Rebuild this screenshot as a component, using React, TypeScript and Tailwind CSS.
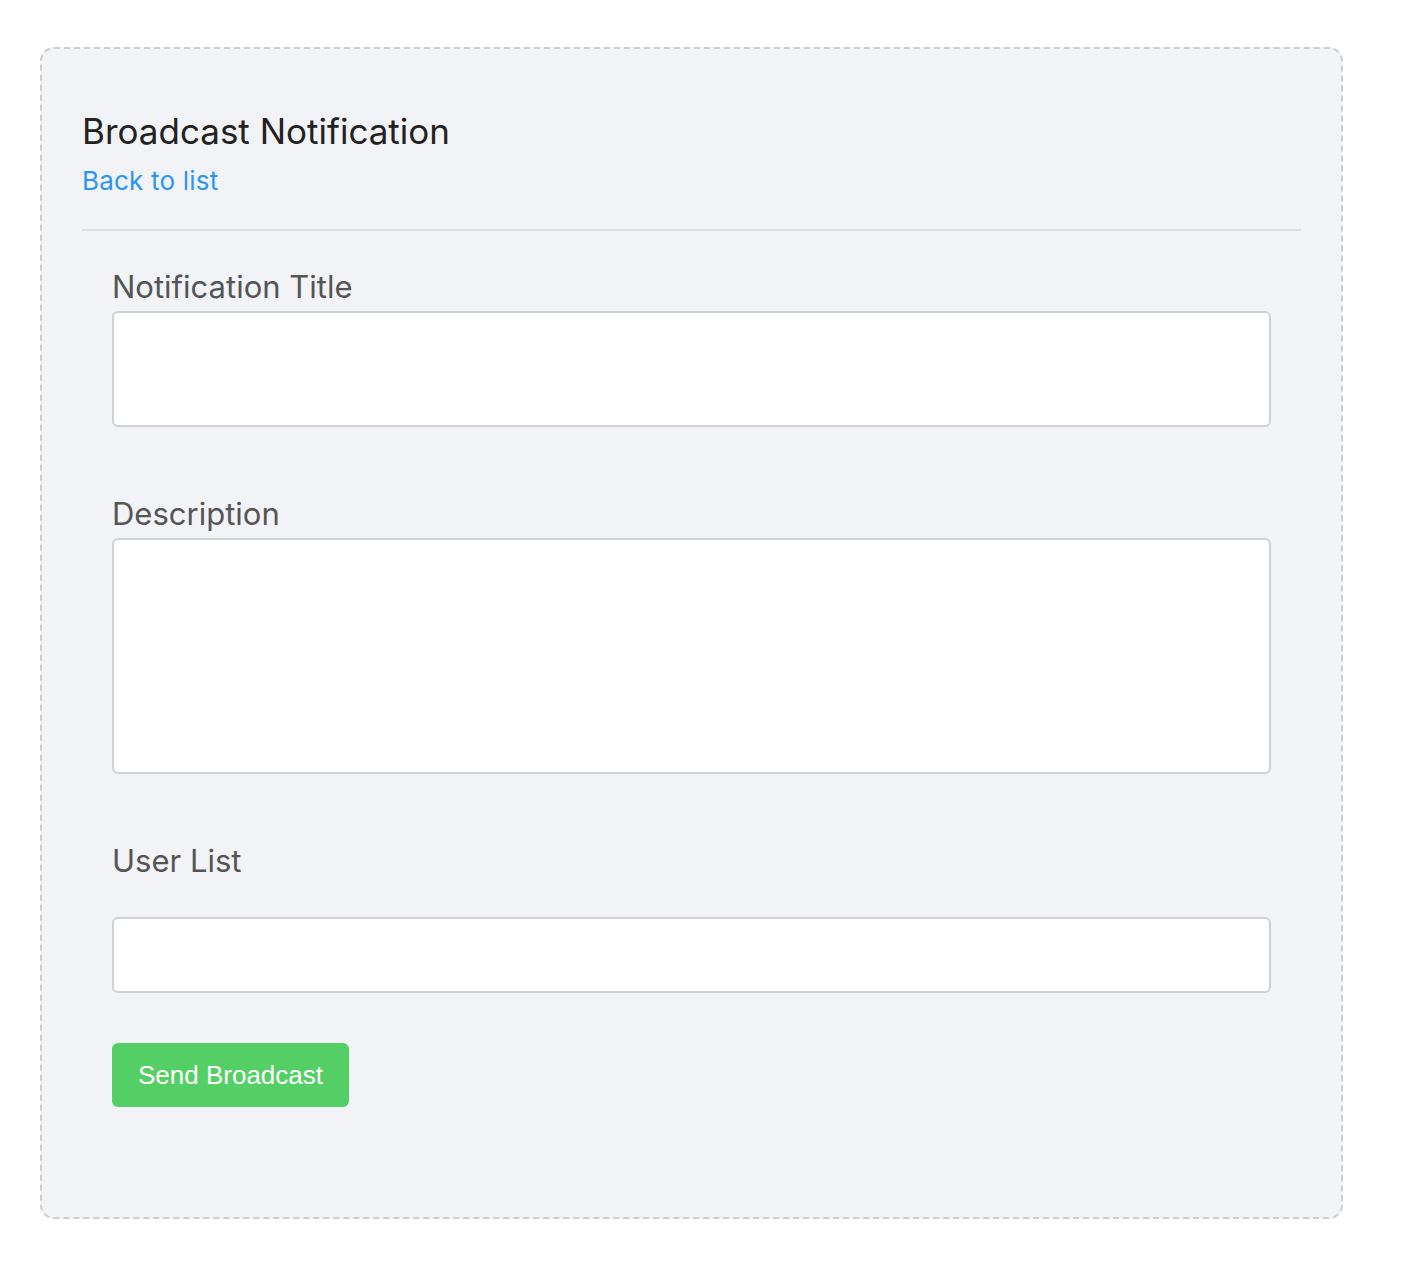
export default function App() {
  return (
    <div className="min-h-screen bg-white pl-[40px] pt-[47px] font-['Inter','Noto_Sans',sans-serif]">
      <div className="w-[1303px] rounded-[14px] border-2 border-dashed border-[#cdcdd0] bg-[#f2f3f7] px-[40px] pb-[110px] pt-[60px]">
        <h3 className="text-[35px] leading-[44px] font-normal text-[#222222]">Broadcast Notification</h3>
        <a href="#" className="mt-[12px] block text-[26px] leading-[32px] tracking-[0.2px] text-[#2997f2]">
          Back to list
        </a>
        <div className="mt-[32px] h-[2px] bg-[#dcdde1]" />

        <form className="px-[30px]" onSubmit={(e) => e.preventDefault()}>
          <label className="mt-[38px] block text-[31px] leading-[36px] text-[#555555]">Notification Title</label>
          <input
            type="text"
            className="mt-[6px] block h-[116px] w-full rounded-[6px] border-2 border-[#cfd0d4] bg-white px-4 outline-none"
          />

          <label className="mt-[69px] block text-[31px] leading-[36px] text-[#555555]">Description</label>
          <textarea className="mt-[6px] block h-[236px] w-full resize-none rounded-[6px] border-2 border-[#cfd0d4] bg-white px-4 outline-none" />

          <label className="mt-[69px] block text-[31px] leading-[36px] text-[#555555]">User List</label>
          <input
            type="text"
            className="mt-[38px] block h-[76px] w-full rounded-[6px] border-2 border-[#cfd0d4] bg-white px-4 outline-none"
          />

          <button
            type="submit"
            className="mt-[50px] block h-[64px] rounded-[6px] bg-[#54cf65] px-[26px] font-['Liberation_Sans',Arial,sans-serif] text-[26px] text-white"
          >
            Send Broadcast
          </button>
        </form>
      </div>
    </div>
  );
}
